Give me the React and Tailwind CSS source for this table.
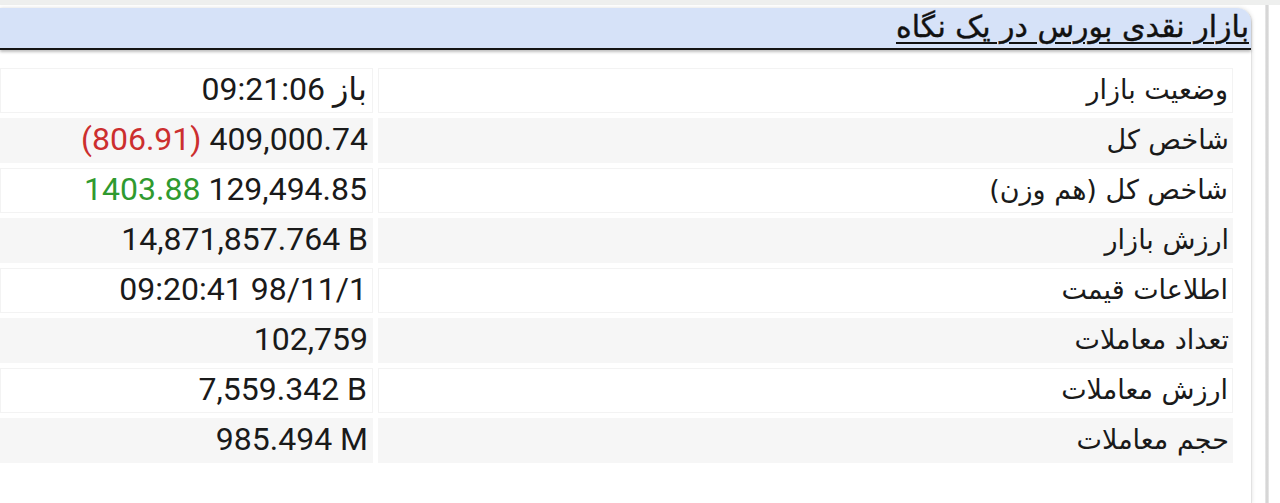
export default function App() {
  const rows = [
    { label: 'وضعیت بازار', value: <><span>باز</span> <span>09:21:06</span></> },
    { label: 'شاخص کل', value: <><span>409,000.74</span> <span className="text-[#cc2f2f]">(806.91)</span></> },
    { label: 'شاخص کل (هم وزن)', value: <><span>129,494.85</span> <span className="text-[#2f9a2f]">1403.88</span></> },
    { label: 'ارزش بازار', value: <span dir="ltr">14,871,857.764 B</span> },
    { label: 'اطلاعات قیمت', value: <><span>98/11/1</span> <span>09:20:41</span></> },
    { label: 'تعداد معاملات', value: <span>102,759</span> },
    { label: 'ارزش معاملات', value: <span dir="ltr">7,559.342 B</span> },
    { label: 'حجم معاملات', value: <span dir="ltr">985.494 M</span> },
  ];

  return (
    <div className="h-[503px] w-[1280px] overflow-hidden bg-white">
      <div className="h-[5px] bg-[#eeefee]" />
      <div className="flex">
        <div className="w-[1252px] pt-[3px]">
          <div className="rounded-tr-[14px] border-r border-[#e2e2e2] shadow-[0_0_4px_rgba(0,0,0,0.12)] h-[495px]">
            <div
              dir="rtl"
              className="h-[42px] rounded-tr-[14px] bg-[#d6e2f8] border-b-2 border-[#151515] shadow-[0_2px_3px_rgba(0,0,0,0.25)] pr-[2px] pt-[1px]"
            >
              <span className="font-['DejaVu_Sans',sans-serif] text-[30px] text-[#111] underline underline-offset-[5px] decoration-[2px] leading-[36px] [-webkit-text-stroke:0.4px_#111]">
                بازار نقدی بورس در یک نگاه
              </span>
            </div>
            <div className="pt-[18px] pr-[18px] flex flex-col gap-[5px]">
              {rows.map((r, i) => (
                <div key={i} className="flex gap-[5px] h-[45px]">
                  <div
                    dir="rtl"
                    className={`w-[373px] flex items-center pr-[5px] pb-[3px] font-['Roboto','DejaVu_Sans',sans-serif] text-[32px] text-[#1a1a1a] ${i % 2 ? 'bg-[#f6f6f6]' : 'bg-white border border-[#f3f3f3]'}`}
                  >
                    <span className="whitespace-nowrap">{r.value}</span>
                  </div>
                  <div
                    dir="rtl"
                    className={`flex-1 flex items-center pr-[4px] pb-[1px] font-['DejaVu_Sans',sans-serif] text-[27px] text-[#1a1a1a] ${i % 2 ? 'bg-[#f6f6f6]' : 'bg-white border border-[#f3f3f3]'}`}
                  >
                    {r.label}
                  </div>
                </div>
              ))}
            </div>
          </div>
        </div>
        <div className="w-[13px]" />
        <div className="w-[4px] h-[498px] bg-gradient-to-r from-[#ececec] via-[#cfcfcf] to-[#ececec]" />
      </div>
    </div>
  );
}
